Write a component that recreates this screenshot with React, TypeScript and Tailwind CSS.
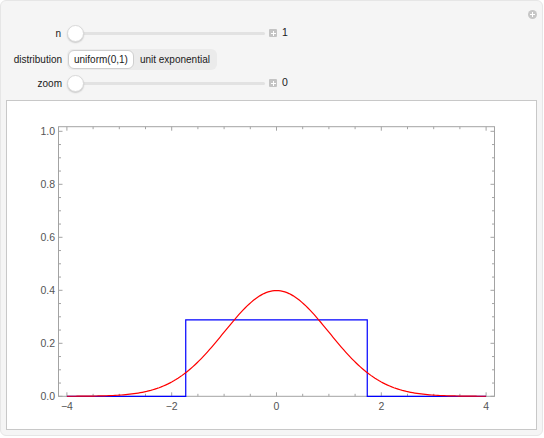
import React from 'react';

const font = { fontFamily: '"Liberation Sans", Arial, sans-serif' };

// page coords: x unit -> px, y unit -> px
const sx = (x: number) => 276.5 + 52.4 * x;
const sy = (y: number) => 397.3 - 265 * y;

const L = 58.5, R = 494.5, T = 127.7, B = 397.3;

function Slider({ value }: { value: string }) {
  return (
    <div className="flex items-center h-[22px]">
      <div className="relative w-[198px] h-[17px] flex items-center">
        <div className="w-full h-[3px] rounded-full bg-[#e2e2e2]" />
        <div className="absolute left-0 top-0 w-[17px] h-[17px] rounded-full bg-white border border-[#dadada] shadow-[0_1px_1.5px_rgba(0,0,0,0.18)]" />
      </div>
      <div className="ml-[4px] w-[8px] h-[8px] bg-[#c4c4c4] rounded-[1px] relative">
        <div className="absolute left-[1.5px] top-[3.5px] w-[5px] h-[1px] bg-white" />
        <div className="absolute left-[3.5px] top-[1.5px] w-[1px] h-[5px] bg-white" />
      </div>
      <span className="ml-[5px] text-[10.5px] text-[#1a1a1a]">{value}</span>
    </div>
  );
}

function Plot() {
  const red: string[] = [];
  for (let i = 0; i <= 200; i++) {
    const x = -4 + (8 * i) / 200;
    const y = Math.exp(-x * x / 2) / Math.sqrt(2 * Math.PI);
    red.push(`${sx(x).toFixed(2)},${sy(y).toFixed(2)}`);
  }
  const a = Math.sqrt(3), h = 1 / (2 * Math.sqrt(3));
  const blue = [[-4, 0], [-a, 0], [-a, h], [a, h], [a, 0], [4, 0]]
    .map(([x, y]) => `${sx(x)},${sy(y)}`).join(' ');

  const xt: { v: number; major: boolean }[] = [];
  for (let k = -8; k <= 8; k++) xt.push({ v: k / 2, major: k % 4 === 0 });
  const yt: { v: number; major: boolean }[] = [];
  for (let k = 0; k <= 20; k++) yt.push({ v: k / 20, major: k % 4 === 0 });

  return (
    <svg width={529} height={328} viewBox="7 102 529 328" className="block">
      <rect x={L} y={T} width={R - L} height={B - T} fill="none" stroke="#a3a3a3" strokeWidth={1} />
      {xt.map(t => {
        const x = sx(t.v), len = t.major ? 4 : 2.5;
        return (
          <g key={'x' + t.v} stroke="#a3a3a3" strokeWidth={1}>
            <line x1={x} y1={B} x2={x} y2={B - len} />
            <line x1={x} y1={T} x2={x} y2={T + len} />
          </g>
        );
      })}
      {yt.map(t => {
        const y = sy(t.v), len = t.major ? 4 : 2.5;
        return (
          <g key={'y' + t.v} stroke="#a3a3a3" strokeWidth={1}>
            <line x1={L} y1={y} x2={L + len} y2={y} />
            <line x1={R} y1={y} x2={R - len} y2={y} />
          </g>
        );
      })}
      {[0, 0.2, 0.4, 0.6, 0.8, 1.0].map(v => (
        <text key={'yl' + v} x={55} y={sy(v) + 3.8} textAnchor="end" fontSize={10.5} fill="#555" style={font}>
          {v.toFixed(1)}
        </text>
      ))}
      {[-4, -2, 0, 2, 4].map(v => (
        <text key={'xl' + v} x={sx(v)} y={411} textAnchor="middle" fontSize={10.5} fill="#555" style={font}>
          {v < 0 ? `\u2212${-v}` : v}
        </text>
      ))}
      <polyline points={blue} fill="none" stroke="#0000ff" strokeWidth={1.2} />
      <polyline points={red.join(' ')} fill="none" stroke="#ff0000" strokeWidth={1.2} />
    </svg>
  );
}

export default function App() {
  return (
    <div className="w-[544px] h-[438px] bg-white" style={font}>
      <div className="relative w-[543px] h-[436px] rounded-[6px] border border-[#e6e6e6] bg-[#f5f5f5] flex flex-col">
        <div className="absolute left-[527px] top-[9px] w-[9px] h-[9px] rounded-full bg-[#c6c6c6]">
          <div className="absolute left-[2px] top-[4px] w-[5px] h-[1px] bg-white" />
          <div className="absolute left-[4px] top-[2px] w-[1px] h-[5px] bg-white" />
        </div>

        <div className="pt-[21px] flex flex-col text-[10px] text-[#1a1a1a]">
          <div className="flex items-center h-[22px]">
            <div className="w-[61px] text-right pr-[1px]">n</div>
            <div className="ml-[5px]"><Slider value="1" /></div>
          </div>
          <div className="flex items-center h-[22px] mt-[4px]">
            <div className="w-[61px] text-right">distribution</div>
            <div className="ml-[5px] flex items-center h-[21px] rounded-[6px] bg-[#ebebeb] p-[1px]">
              <div className="h-[19px] px-[5px] flex items-center rounded-[6px] bg-white border border-[#cfcfcf]">uniform(0,1)</div>
              <div className="h-[19px] px-[6px] flex items-center">unit exponential</div>
            </div>
          </div>
          <div className="flex items-center h-[22px] mt-[2px]">
            <div className="w-[61px] text-right">zoom</div>
            <div className="ml-[5px]"><Slider value="0" /></div>
          </div>
        </div>

        <div className="mt-[6px] mx-[5px] h-[330px] border border-[#c8c8c8] bg-white">
          <Plot />
        </div>
      </div>
    </div>
  );
}
